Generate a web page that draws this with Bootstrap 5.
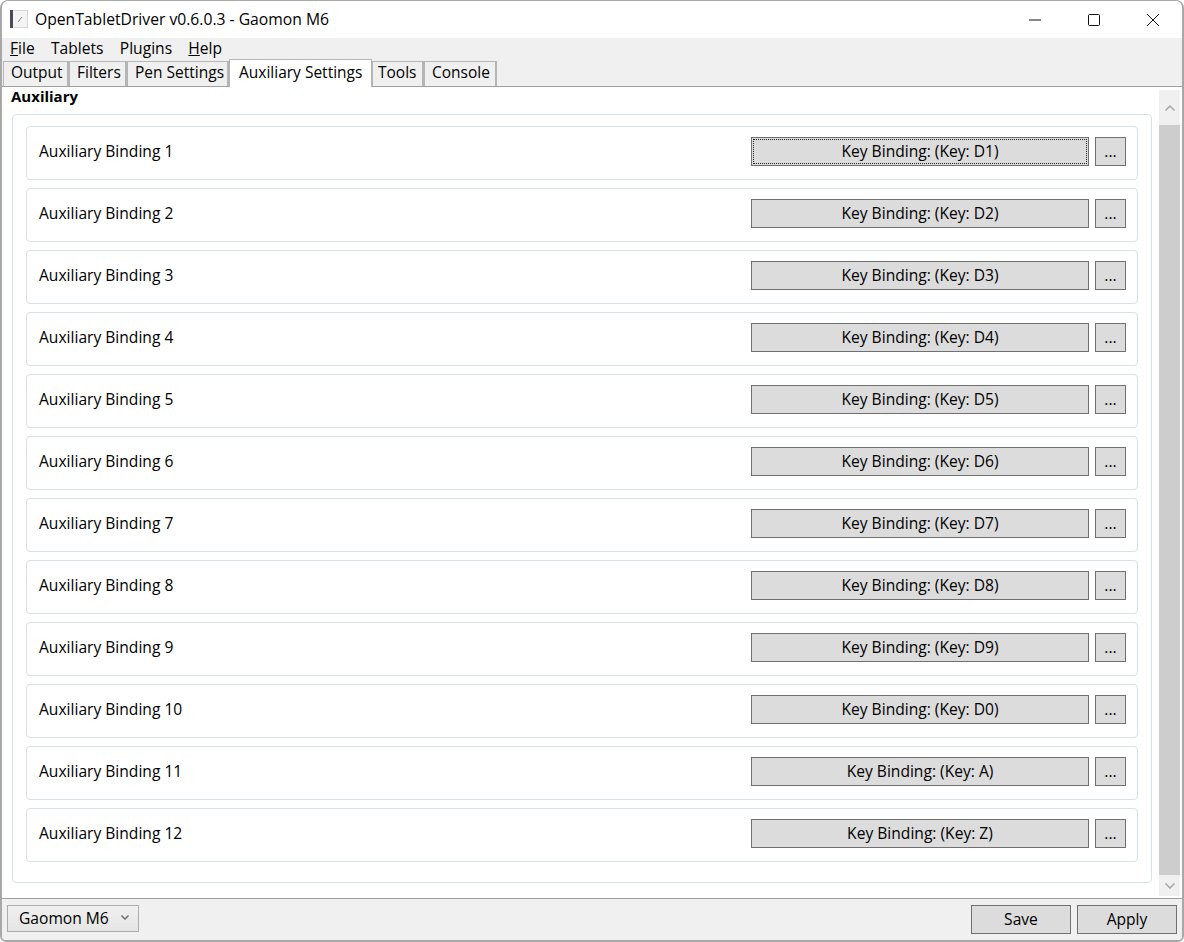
<!DOCTYPE html>
<html lang="en"><head><meta charset="utf-8"><title>OpenTabletDriver</title>
<link href="https://cdn.jsdelivr.net/npm/bootstrap@5.3.0/dist/css/bootstrap.min.css" rel="stylesheet">
<style>
html,body{height:100%;margin:0;background:#fff;overflow:hidden}
body{font-family:"Open Sans","Noto Sans",sans-serif;font-size:15.6px;color:#000;line-height:20px}
.win{width:1184px;height:942px;background:#f0f0f0;border:1px solid #a8a8a8;border-width:1px 2px 2px 2px;border-radius:8px 8px 6px 6px;overflow:hidden;box-sizing:border-box}
.tbar{height:37px;background:#fff;padding-left:8px;padding-bottom:2px;font-size:15.7px}
.tico{width:18px;height:18px;margin-right:7px}
.wbtn{width:59px;height:37px;margin-top:2px}
.mbar{height:22px;padding-left:8px;gap:16.3px;background:#f0f0f0;line-height:21px}
.tabstrip{height:27px;padding-left:1px;align-items:flex-end;border-bottom:1px solid #a0a0a0}
.otab{height:25px;padding-left:7px;border:1px solid #b5b5b5;border-right-width:2px;border-bottom:0;background:#f0f0f0;line-height:20px;white-space:nowrap;font-size:15.5px}
.otab:nth-child(1){width:66px}
.otab:nth-child(2){width:58px}
.otab:nth-child(3){width:102px}
.otab:nth-child(5){width:52px;padding-left:5px}
.otab:nth-child(6){width:73px}
.otab.on{width:143px;height:28px;background:#fff;margin-bottom:-1px;padding-left:9px;border-right-width:1px;line-height:24px;position:relative}
.pane{height:812px;background:#fff;padding:0 2px 0 10px;border-bottom:1px solid #a0a0a0;gap:6px}
.pmain{width:1141px}
.ptitle{font-weight:700;font-size:15px;height:27px;margin-left:-1px;line-height:19px}
.gbox{border:1px solid #d8e0e8;border-radius:4px;height:769px;padding:11px 13px;gap:8px;width:1140px}
.brow{height:54px;border:1px solid #d8e0e8;border-radius:4px;padding:0 11px 3px 12px}
.kbtn,.dots,.fbtn{background:#dcdcdc;border:1px solid #707070;border-radius:0;padding:0 0 2px;color:#000;font-size:15.6px;line-height:20px;display:flex;align-items:center;justify-content:center}
.kbtn{width:338px;height:29px;margin-right:6px}
.dots{width:31px;height:29px}
.focusb{outline:1px dotted #222;outline-offset:-3px}
.blabel{flex-grow:1;margin-top:-2px}
.sbar{width:21px;background:#f0f0f0;height:806px;margin-top:3px}
.sarrow{height:35px}
.sthumb{height:750px;background:#cdcdcd}
.fbar{flex:1;padding:6px 5px 0 5px;background:#f0f0f0;gap:6px}
.devsel{width:132px;height:27px;border:1px solid #adadad;background:linear-gradient(#f0f0f0,#e5e5e5);padding:0 9px 2px 11px}
.fbtn{width:100px;height:29px}
</style></head><body>
<div class="win d-flex flex-column">
 <div class="tbar d-flex align-items-center">
  <svg class="tico" viewBox="0 0 18 18"><rect x="0.5" y="0.5" width="17" height="17" fill="#f4f4f4" stroke="#d8d8d8"/><rect x="0" y="0" width="3" height="18" fill="#4a4a5a"/><path d="M8 12 L12 7" stroke="#888" stroke-width="1"/></svg>
  <span>OpenTabletDriver v0.6.0.3 - Gaomon M6</span>
  <div class="ms-auto d-flex">
   <div class="wbtn d-flex align-items-center justify-content-center"><svg width="12" height="12" viewBox="0 0 12 12"><path d="M0 6H12" stroke="#111" stroke-width="1"/></svg></div>
   <div class="wbtn d-flex align-items-center justify-content-center"><svg width="12" height="12" viewBox="0 0 12 12"><rect x="0.5" y="0.5" width="11" height="11" rx="1" fill="none" stroke="#111"/></svg></div>
   <div class="wbtn d-flex align-items-center justify-content-center"><svg width="12" height="12" viewBox="0 0 12 12"><path d="M0 0L12 12M12 0L0 12" stroke="#111" stroke-width="1"/></svg></div>
  </div>
 </div>
 <div class="mbar d-flex"><span><u>F</u>ile</span><span>Tablets</span><span>Plugins</span><span><u>H</u>elp</span></div>
 <div class="tabstrip d-flex">
  <div class="otab">Output</div><div class="otab">Filters</div><div class="otab">Pen Settings</div><div class="otab on">Auxiliary Settings</div><div class="otab">Tools</div><div class="otab">Console</div>
 </div>
 <div class="pane d-flex">
  <div class="pmain">
   <div class="ptitle">Auxiliary</div>
   <div class="gbox d-flex flex-column">
    <div class="brow d-flex align-items-center"><span class="blabel">Auxiliary Binding 1</span><button class="kbtn focusb">Key Binding: (Key: D1)</button><button class="dots">...</button></div>
    <div class="brow d-flex align-items-center"><span class="blabel">Auxiliary Binding 2</span><button class="kbtn">Key Binding: (Key: D2)</button><button class="dots">...</button></div>
    <div class="brow d-flex align-items-center"><span class="blabel">Auxiliary Binding 3</span><button class="kbtn">Key Binding: (Key: D3)</button><button class="dots">...</button></div>
    <div class="brow d-flex align-items-center"><span class="blabel">Auxiliary Binding 4</span><button class="kbtn">Key Binding: (Key: D4)</button><button class="dots">...</button></div>
    <div class="brow d-flex align-items-center"><span class="blabel">Auxiliary Binding 5</span><button class="kbtn">Key Binding: (Key: D5)</button><button class="dots">...</button></div>
    <div class="brow d-flex align-items-center"><span class="blabel">Auxiliary Binding 6</span><button class="kbtn">Key Binding: (Key: D6)</button><button class="dots">...</button></div>
    <div class="brow d-flex align-items-center"><span class="blabel">Auxiliary Binding 7</span><button class="kbtn">Key Binding: (Key: D7)</button><button class="dots">...</button></div>
    <div class="brow d-flex align-items-center"><span class="blabel">Auxiliary Binding 8</span><button class="kbtn">Key Binding: (Key: D8)</button><button class="dots">...</button></div>
    <div class="brow d-flex align-items-center"><span class="blabel">Auxiliary Binding 9</span><button class="kbtn">Key Binding: (Key: D9)</button><button class="dots">...</button></div>
    <div class="brow d-flex align-items-center"><span class="blabel">Auxiliary Binding 10</span><button class="kbtn">Key Binding: (Key: D0)</button><button class="dots">...</button></div>
    <div class="brow d-flex align-items-center"><span class="blabel">Auxiliary Binding 11</span><button class="kbtn">Key Binding: (Key: A)</button><button class="dots">...</button></div>
    <div class="brow d-flex align-items-center"><span class="blabel">Auxiliary Binding 12</span><button class="kbtn">Key Binding: (Key: Z)</button><button class="dots">...</button></div>
   </div>
  </div>
  <div class="sbar d-flex flex-column">
   <div class="sarrow d-flex align-items-center justify-content-center"><svg width="10" height="6" viewBox="0 0 10 6"><path d="M0.5 5.5L5 1L9.5 5.5" fill="none" stroke="#a6a6a6" stroke-width="1.5"/></svg></div>
   <div class="sthumb"></div>
   <div class="flex-grow-1 d-flex align-items-center justify-content-center"><svg width="10" height="6" viewBox="0 0 10 6"><path d="M0.5 0.5L5 5L9.5 0.5" fill="none" stroke="#a6a6a6" stroke-width="1.5"/></svg></div>
  </div>
 </div>
 <div class="fbar d-flex">
  <div class="devsel d-flex align-items-center justify-content-between"><span>Gaomon M6</span><svg width="8" height="5" viewBox="0 0 8 5"><path d="M0.5 0.5L4 4L7.5 0.5" fill="none" stroke="#666" stroke-width="1.4"/></svg></div>
  <button class="fbtn ms-auto">Save</button><button class="fbtn">Apply</button>
 </div>
</div>
</body></html>
